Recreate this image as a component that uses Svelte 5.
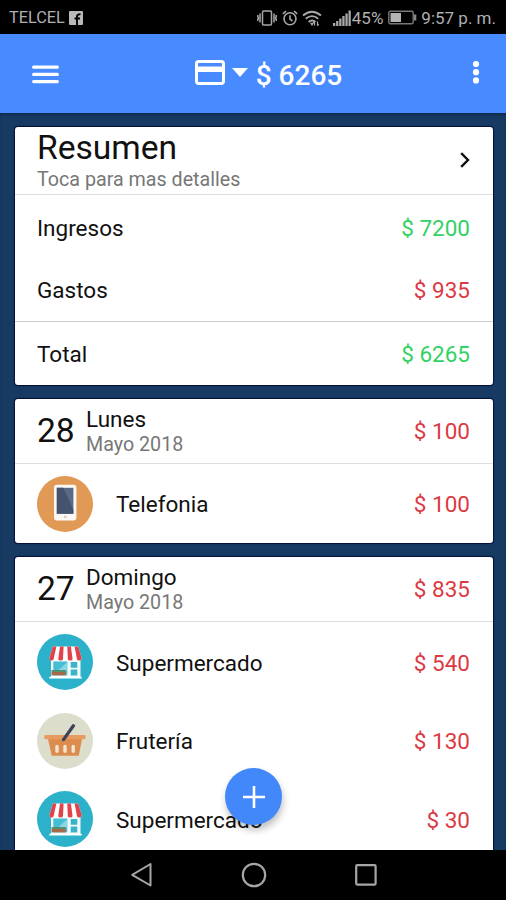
<script>
  const summary = [
    { label: 'Ingresos', amount: 7200, kind: 'income' },
    { label: 'Gastos', amount: 935, kind: 'expense' },
    { label: 'Total', amount: 6265, kind: 'income', total: true }
  ];

  const days = [
    {
      day: 28,
      name: 'Lunes',
      month: 'Mayo 2018',
      total: 100,
      items: [{ icon: 'phone', label: 'Telefonia', amount: 100 }]
    },
    {
      day: 27,
      name: 'Domingo',
      month: 'Mayo 2018',
      total: 835,
      items: [
        { icon: 'store', label: 'Supermercado', amount: 540 },
        { icon: 'basket', label: 'Frutería', amount: 130 },
        { icon: 'store', label: 'Supermercado', amount: 30 }
      ]
    }
  ];
</script>

{#snippet categoryIcon(name)}
  <svg class="category" viewBox="0 0 56 56" width="56" height="56">
    {#if name === 'phone'}
      <circle cx="28" cy="28" r="28" fill="#e19a56" />
      <rect x="17" y="8.8" width="22.4" height="35.7" rx="3" fill="#fbf8f4" />
      <rect x="19.8" y="11.8" width="16.6" height="26" fill="#5b6984" />
      <path d="M19.8 11.8h6.5l10.1 22v4H19.8z" fill="#46536f" />
      <circle cx="28.2" cy="41" r="1.4" fill="#d5d0ca" />
    {:else if name === 'store'}
      <circle cx="28" cy="28" r="28" fill="#2bb2ca" />
      <path d="M14 24h29.5v20H14z" fill="#f4fbfc" />
      <path d="M12.3 42.8h32.4v1.7H12.3z" fill="#fff" />
      <path d="M16.3 27.5h14v13.8h-14z" fill="#45bdd2" />
      <path d="M30.3 28v8.5H21z" fill="#8ad6e4" />
      <path d="M14.5 37.6h14.2v3.8H14.5z" fill="#a2694b" />
      <path d="M14.5 36h14.2v1.8H14.5z" fill="#4f8f6d" />
      <path d="M33.7 28h6.6v5.8h-6.6zM33.7 35.4h6.6v6h-6.6z" fill="#38b5cc" />
      <path d="M15.8 12.6h25.4l3.5 11.6q0 2.3-2.3 2.3t-2.4-1.6q-.2 1.6-2.4 1.6t-2.4-1.6q-.2 1.6-2.4 1.6t-2.4-1.6q-.2 1.6-2.4 1.6T26 24.9q-.2 1.6-2.4 1.6t-2.4-1.6q-.2 1.6-2.4 1.6t-2.2-1.6q-.2 1.6-2.2 1.6t-2.1-2.3z" fill="#fff" />
      <path d="M15.8 12.6h3.6l-2.8 12.6q-.4 1.3-2.2 1.3-2.3 0-2.1-2.3zM23 12.6h3.6l-.6 12.6q-.4 1.3-2.4 1.3t-2.4-1.3zM30.3 12.6h3.6l1.7 12.6q-.4 1.3-2.4 1.3t-2.4-1.3zM37.6 12.6h3.6l3.5 11.6q0 2.3-2.3 2.3-2 0-2.4-1.3z" fill="#e0434b" />
    {:else}
      <circle cx="28" cy="28" r="28" fill="#dcddcb" />
      <path d="M10.8 25h34.4l-3.4 17.8H14.7z" fill="#dd8c50" />
      <rect x="7.3" y="22" width="41.2" height="4.3" rx="1" fill="#e79b5f" />
      <path d="M20 33.5v4.7M28 33.5v4.7M36.2 33.5v4.7" stroke="#f2e5d0" stroke-width="3.4" stroke-linecap="round" />
      <path d="M36.4 12.8 26.5 26.6" stroke="#3d4358" stroke-width="3.3" stroke-linecap="round" />
    {/if}
  </svg>
{/snippet}

<div class="screen">
  <div class="status">
    <span class="carrier">TELCEL</span>
    <svg class="fb" viewBox="0 0 14 14" width="14" height="14">
      <rect width="14" height="14" rx="1" fill="#b9b9b9" />
      <path d="M8 14V5.500Q8 3 11.500 3.200M5.500 7.500h5.500" fill="none" stroke="#000" stroke-width="1.9" />
    </svg>
    <div class="indicators">
      <svg viewBox="0 0 20 16" width="20" height="16" fill="none" stroke="#a8a8a8" stroke-width="1.5">
        <rect x="5.5" y="1" width="9" height="14" rx="1" />
        <path d="M3 3.500v9M17 3.500v9M.8 5v1.500l.6 1.500-.6 1.500V11M19.200 5v1.500L18.600 8l.6 1.500V11" />
      </svg>
      <svg class="alarm" viewBox="0 0 16 16" width="16" height="16" fill="none" stroke="#a8a8a8" stroke-width="1.6">
        <circle cx="8" cy="8.8" r="6" />
        <path d="M8 5.300v3.900l2.400 1.800M.8 3.900 4 1.200M15.200 3.900 12 1.200" />
      </svg>
      <svg class="wifi" viewBox="0 0 20 16" width="20" height="16" fill="none" stroke="#a8a8a8" stroke-width="1.8">
        <path d="M1 5.500Q10-2 19 5.500M3.800 8.800q6.200-5.300 12.400 0M6.600 12q3.400-3 6.800 0" />
        <path d="M9 13.300h2L10 15zM12.500 15.500v-4l-1.200 1.300M15.500 11.500v4l1.200-1.300" stroke-width="1.2" />
      </svg>
      <svg class="signal" viewBox="0 0 18 16" width="18" height="16" fill="#a8a8a8">
        <path d="M0 13h2.300v3H0zM3.100 11h2.300v5H3.100zM6.200 8.500h2.300V16H6.200zM9.300 6h2.300v10H9.300zM12.400 3.500h2.300V16h-2.300zM15.500.5h2.300V16h-2.300z" />
      </svg>
      <span class="percent">45%</span>
      <svg class="battery" viewBox="0 0 29 15" width="29" height="15">
        <rect x=".8" y="1.3" width="24.4" height="12.4" rx="1.5" fill="none" stroke="#777" stroke-width="1.4" />
        <path d="M2.500 3h10.500v9H2.500z" fill="#b4b4b4" />
        <path d="M26 4.500h2.300v6H26z" fill="#888" />
      </svg>
      <span class="time">9:57 p. m.</span>
    </div>
  </div>

  <header>
    <svg class="menu" viewBox="0 0 27 19" width="27" height="19" stroke="#fff" stroke-width="3.3" stroke-linecap="round">
      <path d="M1.700 2.200h23.600M1.700 9.400h23.600M1.700 16.600h23.600" />
    </svg>
    <div class="account">
      <svg viewBox="0 0 30 25" width="30" height="25">
        <rect x="1.5" y="1.5" width="27" height="22" rx="2.2" fill="none" stroke="#fff" stroke-width="3" />
        <path d="M1.500 6.500h27V12h-27z" fill="#fff" />
      </svg>
      <svg class="caret" viewBox="0 0 16 9" width="16" height="9"><path d="M0 0h16L8 9z" fill="#fff" /></svg>
      <span>$ 6265</span>
    </div>
    <svg class="more" viewBox="0 0 8 24" width="8" height="24" fill="#fff">
      <circle cx="4" cy="4" r="3.1" />
      <circle cx="4" cy="12.2" r="3.1" />
      <circle cx="4" cy="20.4" r="3.1" />
    </svg>
  </header>

  <main>
    <section class="card">
      <div class="card-head summary-head">
        <div>
          <h1>Resumen</h1>
          <p class="muted">Toca para mas detalles</p>
        </div>
        <svg class="chevron" viewBox="0 0 10 16" width="10" height="16">
          <path d="M1.200 1.200 8 8l-6.800 6.800" fill="none" stroke="#111" stroke-width="2.4" />
        </svg>
      </div>
      {#each summary as row}
        <div class="summary-row" class:total={row.total}>
          <span>{row.label}</span>
          <span class={row.kind}>$ {row.amount}</span>
        </div>
      {/each}
    </section>

    {#each days as day}
      <section class="card">
        <div class="card-head day-head">
          <span class="number">{day.day}</span>
          <div class="date">
            <h2>{day.name}</h2>
            <p class="muted">{day.month}</p>
          </div>
          <span class="expense">$ {day.total}</span>
        </div>
        <div class="items">
          {#each day.items as item}
            <div class="item">
              {@render categoryIcon(item.icon)}
              <span class="label">{item.label}</span>
              <span class="expense">$ {item.amount}</span>
            </div>
          {/each}
        </div>
      </section>
    {/each}
  </main>

  <button class="fab" aria-label="Agregar">
    <svg viewBox="0 0 22 22" width="22" height="22" stroke="#fff" stroke-width="2.6">
      <path d="M11 0v22M0 11h22" />
    </svg>
  </button>

  <nav>
    <svg viewBox="0 0 24 26" width="24" height="26" fill="none" stroke="#a6a6a6" stroke-width="2">
      <path d="M20.500 2v21.500L2.200 12.800z" stroke-linejoin="round" />
    </svg>
    <svg viewBox="0 0 26 26" width="26" height="26" fill="none" stroke="#a6a6a6" stroke-width="2.2">
      <circle cx="13" cy="13" r="11.2" />
    </svg>
    <svg viewBox="0 0 24 24" width="24" height="24" fill="none" stroke="#a6a6a6" stroke-width="2.2">
      <rect x="2.2" y="2.2" width="19.4" height="19.4" rx="1" />
    </svg>
  </nav>
</div>

<style>
  :global(body) {
    background: #000;
  }

  .screen {
    position: relative;
    display: flex;
    flex-direction: column;
    width: 506px;
    height: 900px;
    overflow: hidden;
    font-family: Roboto, 'Liberation Sans', sans-serif;
    font-size: 22.5px;
    color: #111;
    background: #163a61;
  }

  svg {
    display: block;
    flex: none;
  }

  h1,
  h2,
  p {
    margin: 0;
    font-weight: 400;
  }

  .status {
    display: flex;
    align-items: center;
    flex: none;
    height: 34px;
    box-sizing: border-box;
    padding: 1px 10px 0 9px;
    background: #000;
    color: #b0b0b0;
    font-size: 17px;
    white-space: nowrap;
  }

  .carrier {
    font-size: 16.3px;
    width: 60px;
  }

  .indicators {
    display: flex;
    align-items: center;
    margin-left: auto;
  }

  .alarm {
    margin-left: 5px;
  }

  .wifi {
    margin-left: 4px;
  }

  .signal {
    margin: 0 1px 0 11px;
  }

  .battery {
    margin: 0 4px 0 5px;
  }

  header {
    display: flex;
    align-items: center;
    justify-content: space-between;
    flex: none;
    height: 79px;
    box-sizing: border-box;
    padding: 1px 26px 0 32px;
    background: #488aff;
    color: #fff;
  }

  .account {
    display: flex;
    align-items: center;
    font-size: 28px;
    font-weight: 500;
    padding: 0 0 3px 6px;
  }

  .account span {
    margin: 6px 0 0 8px;
  }

  .caret {
    margin-left: 7px;
  }

  .more {
    margin-bottom: 4px;
  }

  main {
    display: flex;
    flex-direction: column;
    gap: 14px;
    flex: 1;
    min-height: 0;
    overflow: hidden;
    padding: 14px 13px 0 15px;
    box-shadow: inset 0 2px 2px #102c50;
  }

  .card {
    flex: none;
    background: #fff;
    border-radius: 3px;
    box-shadow: 0 0 1px 1px #050f38;
  }

  .card-head {
    display: flex;
    align-items: center;
    box-sizing: border-box;
    border-bottom: 1px solid #dedede;
    padding: 0 23px 0 22px;
  }

  .summary-head {
    height: 68px;
    justify-content: space-between;
  }

  h1 {
    font-size: 33.6px;
    line-height: 38px;
  }

  .muted {
    font-size: 19.7px;
    line-height: 26px;
    color: #777;
  }

  .chevron {
    margin-bottom: 2px;
  }

  .summary-row {
    display: flex;
    align-items: center;
    justify-content: space-between;
    box-sizing: border-box;
    height: 63px;
    padding: 0 23px 0 22px;
  }

  .summary-head + .summary-row {
    padding-top: 2px;
  }

  .total {
    height: 64px;
    border-top: 1px solid #ccc;
  }

  .income {
    color: #32d164;
  }

  .expense {
    color: #dc3a43;
  }

  .day-head {
    height: 65px;
  }

  .number {
    width: 49px;
    font-size: 33.6px;
    padding-bottom: 1px;
  }

  h2 {
    font-size: 22.5px;
    line-height: 26px;
  }

  .date {
    flex: 1;
    padding-top: 2px;
  }

  .items {
    padding-top: 0.5px;
  }

  .item {
    display: flex;
    align-items: center;
    height: 78.7px;
    padding: 0 23px 0 22px;
  }

  .item span {
    padding-top: 1px;
  }

  .label {
    flex: 1;
    margin-left: 23px;
  }

  .fab {
    position: absolute;
    left: 225px;
    top: 768px;
    width: 57px;
    height: 57px;
    padding: 0;
    display: flex;
    align-items: center;
    justify-content: center;
    border: none;
    border-radius: 50%;
    background: #4388fa;
    box-shadow: 1px 5px 7px rgba(0, 0, 0, 0.25);
  }

  nav {
    display: flex;
    align-items: center;
    justify-content: center;
    gap: 87px;
    flex: none;
    height: 50px;
    padding-left: 1px;
    background: #000;
  }
</style>
